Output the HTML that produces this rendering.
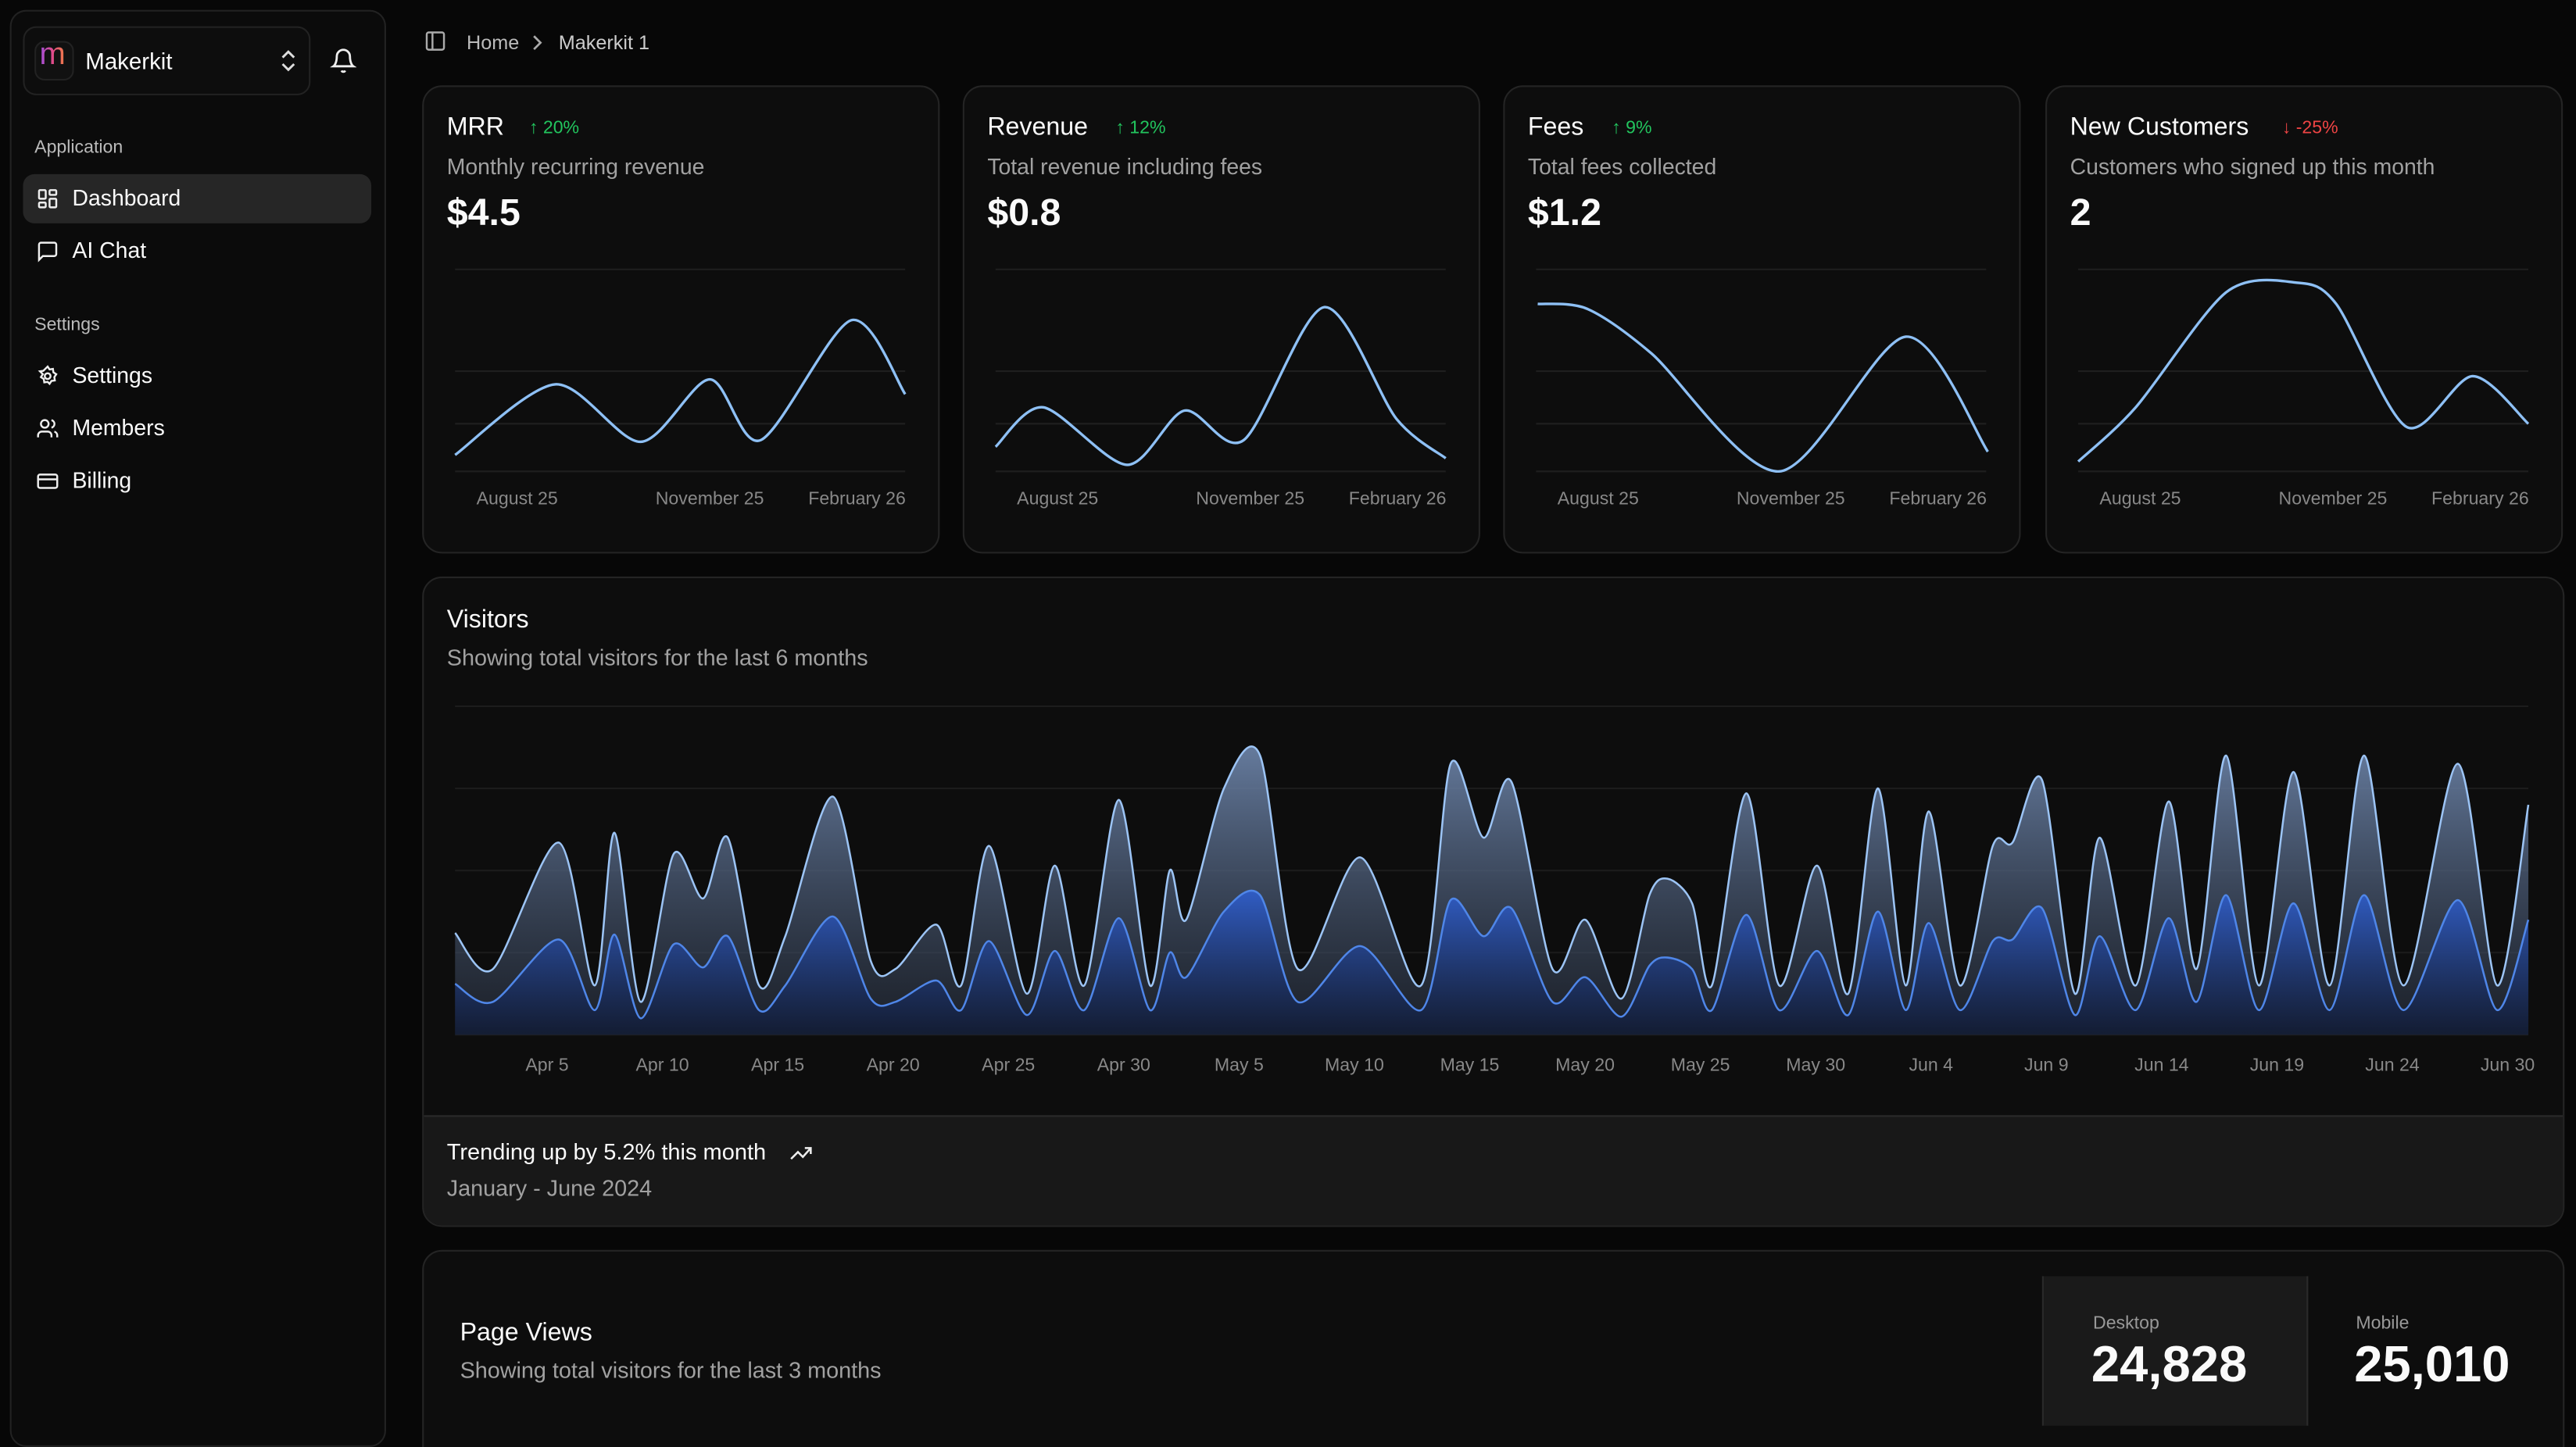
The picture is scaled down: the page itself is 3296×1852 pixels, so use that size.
<!DOCTYPE html>
<html><head><meta charset="utf-8"><style>
html,body{margin:0;padding:0;background:#070707;width:3296px;height:1852px;overflow:hidden}
#root{position:absolute;left:0;top:0;width:1568px;height:881px;transform:scale(2.10204,2.10216);transform-origin:0 0;font-family:"Liberation Sans",sans-serif;color:#fafafa;overflow:hidden}
.abs{position:absolute}
.side{left:6px;top:6px;width:227px;height:873px;border:1px solid #222;border-radius:10px;background:#0b0b0b}
.card{position:absolute;border:1px solid #242424;border-radius:12px;background:#0d0d0d;overflow:hidden}
.t{position:absolute;white-space:nowrap}
.nav{position:absolute;left:14px;width:212px;height:30px;border-radius:7px;font-size:13.5px}
.nav span{position:absolute;left:30px;top:7px}
.nav svg{position:absolute;left:8px;top:8px}
.lbl{font-size:11px;color:#9a9a9a}
</style></head><body><div id="root">
<div class="abs side"></div>
<div class="abs" style="left:14px;top:16px;width:173px;height:40px;border:1px solid #222;border-radius:8px;background:#0d0d0d"></div>
<div class="abs" style="left:21px;top:25px;width:22px;height:22px;border-radius:6px;background:#111;border:1px solid #222"></div>
<div class="t" style="left:24px;top:23px;font-size:19px;background:linear-gradient(90deg,#a050e0,#e04a8a,#f08040);-webkit-background-clip:text;color:transparent">m</div>
<div class="t" style="left:52px;top:29px;font-size:14px">Makerkit</div>
<svg class="abs" style="left:170px;top:29px" width="11" height="16" viewBox="0 0 11 16" fill="none" stroke="#ddd" stroke-width="1.4"><path d="M2 6l3.5-3.5L9 6M2 10l3.5 3.5L9 10"/></svg>
<svg class="abs" style="left:201px;top:29px" width="16" height="16" viewBox="0 0 24 24" fill="none" stroke="#eee" stroke-width="2"><path d="M6 8a6 6 0 0 1 12 0c0 7 3 9 3 9H3s3-2 3-9M10.3 21a1.9 1.9 0 0 0 3.4 0"/></svg>
<div class="t lbl" style="left:21px;top:84px;color:#bbb">Application</div>
<div class="nav" style="top:106px;background:#262626"><svg width="14" height="14" viewBox="0 0 24 24" fill="none" stroke="#eee" stroke-width="2"><rect x="3" y="3" width="7" height="9" rx="1"/><rect x="14" y="3" width="7" height="5" rx="1"/><rect x="14" y="12" width="7" height="9" rx="1"/><rect x="3" y="16" width="7" height="5" rx="1"/></svg><span>Dashboard</span></div>
<div class="nav" style="top:138px"><svg width="14" height="14" viewBox="0 0 24 24" fill="none" stroke="#eee" stroke-width="2"><path d="M21 15a2 2 0 0 1-2 2H7l-4 4V5a2 2 0 0 1 2-2h14a2 2 0 0 1 2 2z"/></svg><span>AI Chat</span></div>
<div class="t lbl" style="left:21px;top:192px;color:#bbb">Settings</div>
<div class="nav" style="top:214px"><svg width="14" height="14" viewBox="0 0 24 24" fill="none" stroke="#eee" stroke-width="2"><circle cx="12" cy="12" r="3"/><path d="M12 2l2 3 3.5-.5.5 3.5 3 2-2 3 .5 3.5-3.5.5-2 3-2-2-3.5.5-.5-3.5-3-2 2-3L4 7l3.5-.5z"/></svg><span>Settings</span></div>
<div class="nav" style="top:246px"><svg width="14" height="14" viewBox="0 0 24 24" fill="none" stroke="#eee" stroke-width="2"><circle cx="9" cy="7" r="4"/><path d="M2 21v-2a4 4 0 0 1 4-4h6a4 4 0 0 1 4 4v2M16 3.1a4 4 0 0 1 0 7.8M22 21v-2a4 4 0 0 0-3-3.9"/></svg><span>Members</span></div>
<div class="nav" style="top:278px"><svg width="14" height="14" viewBox="0 0 24 24" fill="none" stroke="#eee" stroke-width="2"><rect x="2" y="5" width="20" height="14" rx="2"/><path d="M2 10h20"/></svg><span>Billing</span></div>

<svg class="abs" style="left:258px;top:18px" width="14" height="14" viewBox="0 0 24 24" fill="none" stroke="#aaa" stroke-width="2"><rect x="3" y="3" width="18" height="18" rx="2"/><path d="M9 3v18"/></svg>
<div class="t" style="left:284px;top:19px;font-size:12px;color:#bbb">Home</div>
<svg class="abs" style="left:322px;top:20px" width="10" height="12" viewBox="0 0 10 12" fill="none" stroke="#aaa" stroke-width="1.3"><path d="M3 2l4 4-4 4"/></svg>
<div class="t" style="left:340px;top:19px;font-size:12px;color:#ccc">Makerkit 1</div>

<div id="cards"></div>

<div class="card" style="left:257px;top:351px;width:1302px;height:394px">
<div style="position:absolute;left:0;right:0;top:327px;bottom:0;background:#181818;border-top:1px solid #2a2a2a"></div>
</div>
<div class="t" style="left:272px;top:369px;font-size:15.3px">Visitors</div>
<div class="t" style="left:272px;top:393px;font-size:13.7px;color:#a1a1a1">Showing total visitors for the last 6 months</div>
<svg class="abs" style="left:0;top:0" width="1568" height="881" id="vis"></svg>
<div class="t" style="left:272px;top:694px;font-size:13.8px">Trending up by 5.2% this month</div>
<svg class="abs" style="left:480px;top:696px" width="15" height="12" viewBox="0 0 24 20" fill="none" stroke="#eee" stroke-width="2"><path d="M2 16l7-7 5 5 8-9M16 5h6v6"/></svg>
<div class="t" style="left:272px;top:716px;font-size:13.7px;color:#a1a1a1">January - June 2024</div>

<div class="card" style="left:257px;top:761px;width:1302px;height:140px"></div>
<div class="t" style="left:280px;top:803px;font-size:15.3px">Page Views</div>
<div class="t" style="left:280px;top:827px;font-size:13.7px;color:#a1a1a1">Showing total visitors for the last 3 months</div>
<div class="abs" style="left:1243px;top:777px;width:160px;height:91px;background:#1a1a1a;border-right:1px solid #2a2a2a;border-left:1px solid #2a2a2a"></div>
<div class="t" style="left:1274px;top:800px;font-size:11px;color:#999">Desktop</div>
<div class="t" style="left:1273px;top:813px;font-size:31px;font-weight:bold">24,828</div>
<div class="t" style="left:1434px;top:800px;font-size:11px;color:#999">Mobile</div>
<div class="t" style="left:1433px;top:813px;font-size:31px;font-weight:bold">25,010</div>
</div>
<script>
(function(){
function smooth(p){var d="M"+p[0][0]+","+p[0][1];for(var i=0;i<p.length-1;i++){var p0=p[i-1]||p[i],p1=p[i],p2=p[i+1],p3=p[i+2]||p2;var t=7;d+=" C"+(p1[0]+(p2[0]-p0[0])/t).toFixed(1)+","+(p1[1]+(p2[1]-p0[1])/t).toFixed(1)+" "+(p2[0]-(p3[0]-p1[0])/t).toFixed(1)+","+(p2[1]-(p3[1]-p1[1])/t).toFixed(1)+" "+p2[0]+","+p2[1];}return d;}
var cards=[
{x:257,title:"MRR",badge:"↑ 20%",up:1,bx:322,desc:"Monthly recurring revenue",val:"$4.5",pts:[[277,277],[338,234],[390,269],[432,231],[463,268],[518,195],[551,240]]},
{x:586,title:"Revenue",badge:"↑ 12%",up:1,bx:679,desc:"Total revenue including fees",val:"$0.8",pts:[[606,272],[635,248],[686,283],[721,250],[757,268],[806,187],[850,255],[880,279]]},
{x:915,title:"Fees",badge:"↑ 9%",up:1,bx:981,desc:"Total fees collected",val:"$1.2",pts:[[936,185],[966,188],[1005,215],[1083,287],[1160,205],[1210,275]]},
{x:1245,title:"New Customers",badge:"↓ -25%",up:0,bx:1389,desc:"Customers who signed up this month",val:"2",pts:[[1265,281],[1300,248],[1355,178],[1397,172],[1422,185],[1465,260],[1505,229],[1539,258]]}];
var h="",s='<svg class="abs" style="left:0;top:0" width="1568" height="881">';
cards.forEach(function(c){
h+='<div class="card" style="left:'+c.x+'px;top:52px;width:313px;height:283px"></div>'+
'<div class="t" style="left:'+(c.x+15)+'px;top:69px;font-size:15.3px">'+c.title+'</div>'+
'<div class="t" style="left:'+c.bx+'px;top:72px;font-size:11px;color:'+(c.up?'#22c55e':'#ef4444')+'">'+c.badge+'</div>'+
'<div class="t" style="left:'+(c.x+15)+'px;top:94px;font-size:13.5px;color:#a1a1a1">'+c.desc+'</div>'+
'<div class="t" style="left:'+(c.x+15)+'px;top:116px;font-size:23px;font-weight:bold">'+c.val+'</div>'+
'<div class="t" style="left:'+(c.x+33)+'px;top:298px;font-size:11px;color:#888">August 25</div>'+
'<div class="t" style="left:'+(c.x+142)+'px;top:298px;font-size:11px;color:#888">November 25</div>'+
'<div class="t" style="left:'+(c.x+235)+'px;top:298px;font-size:11px;color:#888">February 26</div>';
[164,226,258,287].forEach(function(y){s+='<line x1="'+(c.x+20)+'" x2="'+(c.x+294)+'" y1="'+y+'" y2="'+y+'" stroke="#1f1f1f"/>';});
s+='<path d="'+smooth(c.pts)+'" fill="none" stroke="#8ec0f5" stroke-width="1.6"/>';
});
document.getElementById("cards").innerHTML=h+s+"</svg>";
var tp=[[277,568],[300,590],[340,513],[362,600],[374,507],[390,610],[410,520],[428,547],[443,510],[462,600],[478,570],[507,485],[530,585],[545,590],[570,563],[585,600],[602,515],[625,605],[642,527],[660,600],[681,487],[700,600],[712,530],[722,560],[745,480],[767,460],[790,590],[828,522],[865,600],[883,465],[903,510],[920,476],[945,590],[965,560],[987,608],[1004,545],[1015,535],[1030,550],[1042,600],[1063,483],[1083,600],[1106,527],[1125,605],[1143,480],[1160,600],[1174,494],[1193,600],[1213,515],[1225,513],[1243,475],[1263,605],[1278,510],[1300,600],[1320,488],[1337,590],[1355,460],[1375,600],[1396,470],[1418,600],[1439,460],[1463,600],[1496,465],[1520,600],[1539,490]];
var bt=tp.map(function(p){return [p[0],Math.round(630-(630-p[1])*0.5)];});
var v='<defs><linearGradient id="g1" x1="0" y1="0" x2="0" y2="1"><stop offset="0" stop-color="#6f87ad" stop-opacity=".9"/><stop offset="1" stop-color="#2a3344" stop-opacity=".5"/></linearGradient><linearGradient id="g2" x1="0" y1="0" x2="0" y2="1"><stop offset="0" stop-color="#2f5fd0" stop-opacity=".9"/><stop offset="1" stop-color="#0e1a3a" stop-opacity=".6"/></linearGradient></defs>';
[430,480,530,580,630].forEach(function(y){v+='<line x1="277" x2="1539" y1="'+y+'" y2="'+y+'" stroke="#1c1c1c"/>';});
var dt=smooth(tp),db=smooth(bt);
v+='<path d="'+dt+' L1539,630 L277,630Z" fill="url(#g1)"/><path d="'+db+' L1539,630 L277,630Z" fill="url(#g2)"/>';
v+='<path d="'+dt+'" fill="none" stroke="#9cc4f5" stroke-width="1.2"/><path d="'+db+'" fill="none" stroke="#4f86e8" stroke-width="1.2"/>';
var labs=["Apr 5","Apr 10","Apr 15","Apr 20","Apr 25","Apr 30","May 5","May 10","May 15","May 20","May 25","May 30","Jun 4","Jun 9","Jun 14","Jun 19","Jun 24","Jun 30"];
labs.forEach(function(l,i){v+='<text x="'+(333+i*70.2)+'" y="652" fill="#888" font-size="11" text-anchor="middle" font-family="Liberation Sans">'+l+'</text>';});
document.getElementById("vis").innerHTML=v;
})();
</script>
</body></html>
